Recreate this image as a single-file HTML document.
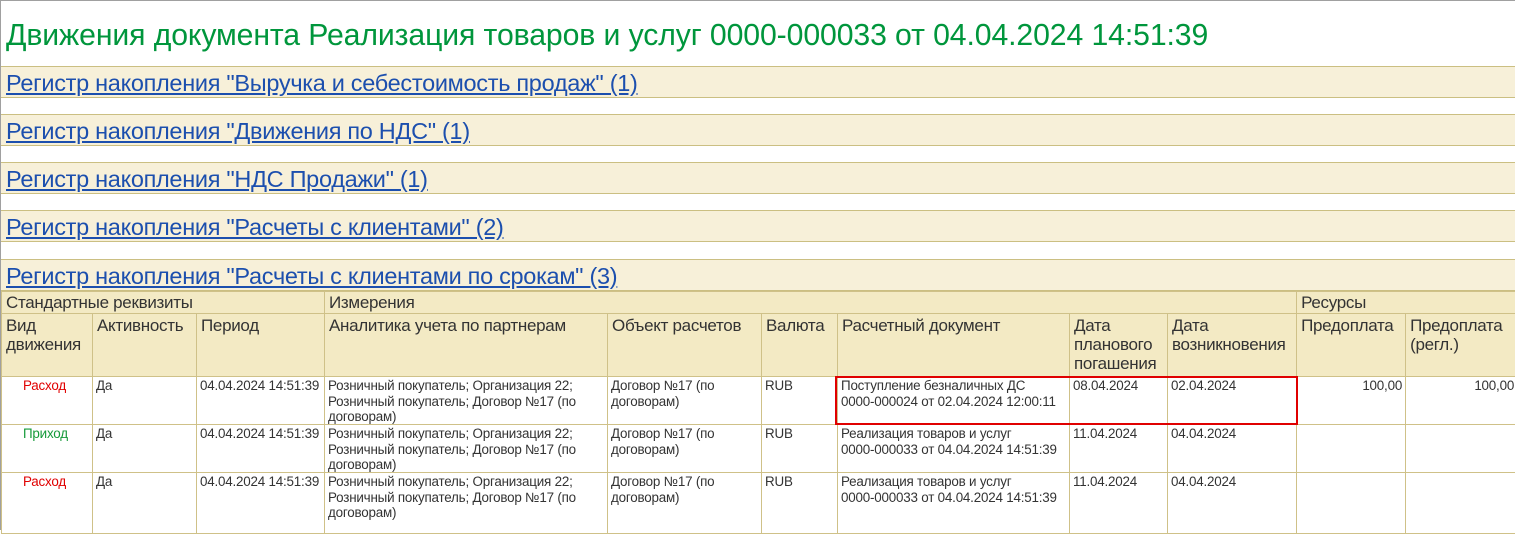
<!DOCTYPE html>
<html><head><meta charset="utf-8"><style>
*{margin:0;padding:0;box-sizing:border-box}
body{width:1515px;height:530px;overflow:hidden;background:#fff;font-family:"Liberation Sans","Noto Sans CJK SC",sans-serif;position:relative}
.top{position:absolute;left:0;top:0;width:1515px;height:1px;background:#a0a0a0}
.lft{position:absolute;left:0;top:0;width:1px;height:530px;background:#a0a0a0}
h1{position:absolute;left:6px;top:19px;font-size:30.2px;font-weight:normal;color:#00963c;white-space:nowrap;letter-spacing:-0.1px}
.band{position:absolute;left:1px;width:1514px;height:32px;background:#f7f0d9;border-top:1px solid #cbbf82;border-bottom:1px solid #cbbf82}
.band a{position:absolute;left:5px;top:3px;font-size:23.5px;color:#1c4fae;text-decoration:underline;white-space:nowrap;letter-spacing:-0.3px}
table{position:absolute;left:1px;top:291px;border-collapse:collapse;table-layout:fixed;width:1516px}
td,th{border:1px solid #cfc188;vertical-align:top;text-align:left;font-weight:normal;overflow:hidden}
th{background:#f3eac4;font-size:17px;color:#333;padding:0 4px;line-height:19px;letter-spacing:-0.3px}
th div{height:62px;overflow:hidden;padding-top:2px}
tr.h1 th{height:22px;padding-top:1px}
td{font-size:13.4px;color:#333;padding:0 3px;line-height:15.5px;letter-spacing:-0.2px}
td div{height:47px;overflow:hidden;padding-top:1px}
tr.last td div{height:60px}
.r{color:#e00000;padding-left:21px}
.g{color:#169a3a;padding-left:21px}
.n{text-align:right}
.box{position:absolute;left:835px;top:376px;width:463px;height:49px;border:2px solid #e00000}
</style></head><body>
<div class="top"></div><div class="lft"></div>
<h1>Движения документа Реализация товаров и услуг 0000-000033 от 04.04.2024 14:51:39</h1>
<div class="band" style="top:66px"><a>Регистр накопления "Выручка и себестоимость продаж" (1)</a></div>
<div class="band" style="top:114px"><a>Регистр накопления "Движения по НДС" (1)</a></div>
<div class="band" style="top:162px"><a>Регистр накопления "НДС Продажи" (1)</a></div>
<div class="band" style="top:210px"><a>Регистр накопления "Расчеты с клиентами" (2)</a></div>
<div class="band" style="top:259px"><a>Регистр накопления "Расчеты с клиентами по срокам" (3)</a></div>
<table>
<colgroup><col style="width:91px"><col style="width:104px"><col style="width:128px"><col style="width:283px"><col style="width:154px"><col style="width:76px"><col style="width:232px"><col style="width:98px"><col style="width:129px"><col style="width:109px"><col style="width:112px"></colgroup>
<tr class="h1"><th colspan="3">Стандартные реквизиты</th><th colspan="6">Измерения</th><th colspan="2">Ресурсы</th></tr>
<tr><th><div>Вид движения</div></th><th><div>Активность</div></th><th><div>Период</div></th><th><div>Аналитика учета по партнерам</div></th><th><div>Объект расчетов</div></th><th><div>Валюта</div></th><th><div>Расчетный документ</div></th><th><div>Дата планового погашения</div></th><th><div>Дата возникновения</div></th><th><div>Предоплата</div></th><th><div>Предоплата (регл.)</div></th></tr>
<tr><td class="r"><div>Расход</div></td><td><div>Да</div></td><td><div>04.04.2024 14:51:39</div></td><td><div>Розничный покупатель; Организация 22;<br>Розничный покупатель; Договор №17 (по<br>договорам)</div></td><td><div>Договор №17 (по<br>договорам)</div></td><td><div>RUB</div></td><td><div>Поступление безналичных ДС<br>0000-000024 от 02.04.2024 12:00:11</div></td><td><div>08.04.2024</div></td><td><div>02.04.2024</div></td><td class="n"><div>100,00</div></td><td class="n"><div>100,00</div></td></tr>
<tr><td class="g"><div>Приход</div></td><td><div>Да</div></td><td><div>04.04.2024 14:51:39</div></td><td><div>Розничный покупатель; Организация 22;<br>Розничный покупатель; Договор №17 (по<br>договорам)</div></td><td><div>Договор №17 (по<br>договорам)</div></td><td><div>RUB</div></td><td><div>Реализация товаров и услуг<br>0000-000033 от 04.04.2024 14:51:39</div></td><td><div>11.04.2024</div></td><td><div>04.04.2024</div></td><td><div></div></td><td><div></div></td></tr>
<tr class="last"><td class="r"><div>Расход</div></td><td><div>Да</div></td><td><div>04.04.2024 14:51:39</div></td><td><div>Розничный покупатель; Организация 22;<br>Розничный покупатель; Договор №17 (по<br>договорам)</div></td><td><div>Договор №17 (по<br>договорам)</div></td><td><div>RUB</div></td><td><div>Реализация товаров и услуг<br>0000-000033 от 04.04.2024 14:51:39</div></td><td><div>11.04.2024</div></td><td><div>04.04.2024</div></td><td><div></div></td><td><div></div></td></tr>
</table>
<div class="box"></div>
</body></html>
